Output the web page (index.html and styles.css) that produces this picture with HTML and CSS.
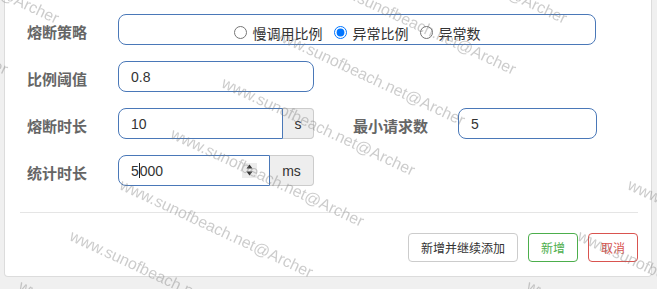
FILE: index.html
```html
<!DOCTYPE html>
<html lang="zh-CN">
<head>
<meta charset="utf-8">
<title>熔断规则</title>
<link rel="stylesheet" href="styles.css">
</head>
<body>
<div class="card">
  <div class="form">
    <div class="row">
      <div class="label">熔断策略</div>
      <div class="radio-box">
        <label class="radio"><input type="radio" name="strategy"><span>慢调用比例</span></label>
        <label class="radio"><input type="radio" name="strategy" checked><span>异常比例</span></label>
        <label class="radio"><input type="radio" name="strategy"><span>异常数</span></label>
      </div>
    </div>
    <div class="row">
      <div class="label">比例阈值</div>
      <input class="input w196" type="text" value="0.8">
    </div>
    <div class="row">
      <div class="label">熔断时长</div>
      <div class="group">
        <input class="input grouped" type="text" value="10">
        <span class="addon addon-s">s</span>
      </div>
      <div class="label label2">最小请求数</div>
      <input class="input w139" type="text" value="5">
    </div>
    <div class="row">
      <div class="label">统计时长</div>
      <div class="group">
        <div class="input grouped fake">
          <span>5</span><span class="caret"></span><span>000</span>
          <svg class="spin" width="15" height="15" viewBox="0 0 15 15"><rect width="15" height="15" fill="#ececec"/><polygon points="4.5,5.5 10.5,5.5 7.5,1.5" fill="#333"/><polygon points="4.5,8.5 10.5,8.5 7.5,12.5" fill="#333"/></svg>
        </div>
        <span class="addon addon-ms">ms</span>
      </div>
    </div>
  </div>
  <div class="divider"></div>
  <div class="actions">
    <button class="btn">新增并继续添加</button>
    <button class="btn btn-green">新增</button>
    <button class="btn btn-red">取消</button>
  </div>
</div>
<div class="wm">
  <span style="left:378px;top:-77px">www.sunofbeach.net@Archer</span>
  <span style="left:327px;top:-26px">www.sunofbeach.net@Archer</span>
  <span style="left:276px;top:25px">www.sunofbeach.net@Archer</span>
  <span style="left:226px;top:75px">www.sunofbeach.net@Archer</span>
  <span style="left:175px;top:126px">www.sunofbeach.net@Archer</span>
  <span style="left:124px;top:177px">www.sunofbeach.net@Archer</span>
  <span style="left:74px;top:228px">www.sunofbeach.net@Archer</span>
  <span style="left:23px;top:278px">www.sunofbeach.net@Archer</span>
  <span style="left:-130px;top:-77px">www.sunofbeach.net@Archer</span>
  <span style="left:-181px;top:-26px">www.sunofbeach.net@Archer</span>
  <span style="left:632px;top:177px">www.sunofbeach.net@Archer</span>
  <span style="left:582px;top:228px">www.sunofbeach.net@Archer</span>
  <span style="left:531px;top:278px">www.sunofbeach.net@Archer</span>
</div>
</body>
</html>
```

FILE: styles.css
```css
html, body {
  margin: 0;
  padding: 0;
}
body {
  background: #f0f0f0;
  font-family: "Liberation Sans", "Noto Sans CJK SC", sans-serif;
  color: #333;
  height: 289px;
  overflow: hidden;
}
.card {
  margin: 0 5px 0 4px;
  background: #fff;
  border: 1px solid #dcdcdc;
  border-top: none;
  border-radius: 0 0 4px 4px;
  padding: 14px 13px 14px 15px;
}
.form {
  display: flex;
  flex-direction: column;
  gap: 16px;
}
.row {
  display: flex;
  align-items: center;
  height: 31px;
}
.label {
  box-sizing: border-box;
  width: 98px;
  padding-left: 7px;
  padding-top: 4px;
  font-size: 15px;
  font-weight: bold;
  color: #666;
  font-family: "Noto Sans CJK SC", sans-serif;
  flex: none;
}
.label2 {
  width: 105px;
  margin-left: 39px;
  padding-left: 0;
}
.radio-box {
  box-sizing: border-box;
  width: 478px;
  height: 31px;
  border: 1px solid #4a78b8;
  border-radius: 8px;
  display: flex;
  justify-content: center;
  align-items: center;
  gap: 11px;
  padding-top: 6px;
}
.radio {
  display: flex;
  align-items: center;
  font-size: 14px;
  color: #333;
  font-family: "Noto Sans CJK SC", sans-serif;
}
.radio input {
  margin: 0 6px 0 0;
  width: 13px;
  height: 13px;
}
.radio span {
  line-height: 16px;
}
.input {
  box-sizing: border-box;
  height: 31px;
  border: 1px solid #4a78b8;
  border-radius: 8px;
  padding: 0 12px;
  font-family: "Liberation Sans", sans-serif;
  font-size: 14px;
  color: #333;
  background: #fff;
  outline: none;
  margin: 0;
}
.w196 { width: 196px; }
.w139 { width: 139px; }
.group {
  display: flex;
  width: 196px;
  height: 31px;
  flex: none;
}
.grouped {
  flex: 1;
  min-width: 0;
  border-radius: 8px 0 0 8px;
}
.addon {
  box-sizing: border-box;
  height: 31px;
  border: 1px solid #ccc;
  border-left: none;
  border-radius: 0 4px 4px 0;
  background: #eee;
  display: flex;
  align-items: center;
  justify-content: center;
  font-size: 14px;
  color: #333;
  flex: none;
}
.addon-s { width: 31px; }
.addon-ms { width: 44px; }
.fake {
  display: flex;
  align-items: center;
}
.caret {
  display: inline-block;
  width: 1px;
  height: 15px;
  background: #222;
}
.spin {
  margin-left: auto;
  display: block;
}
.divider {
  margin-top: 26px;
  border-top: 1px solid #e5e5e5;
}
.actions {
  display: flex;
  justify-content: flex-end;
  gap: 10px;
  margin-top: 20px;
}
.btn {
  box-sizing: border-box;
  height: 29px;
  padding: 0 12px;
  border: 1px solid #ccc;
  border-radius: 4px;
  background: #fff;
  font-family: "Noto Sans CJK SC", sans-serif;
  font-size: 12px;
  color: #333;
  margin: 0;
}
.btn-green {
  border-color: #4cae4c;
  color: #4cae4c;
}
.btn-red {
  border-color: #d9534f;
  color: #d9534f;
}
.wm {
  position: fixed;
  left: 0;
  top: 0;
  width: 657px;
  height: 289px;
  overflow: hidden;
  pointer-events: none;
}
.wm span {
  position: absolute;
  white-space: nowrap;
  transform: rotate(25deg);
  transform-origin: 0 0;
  font-family: "Liberation Sans", sans-serif;
  font-size: 16px;
  line-height: 16px;
  color: rgba(120, 120, 120, 0.38);
}
```
